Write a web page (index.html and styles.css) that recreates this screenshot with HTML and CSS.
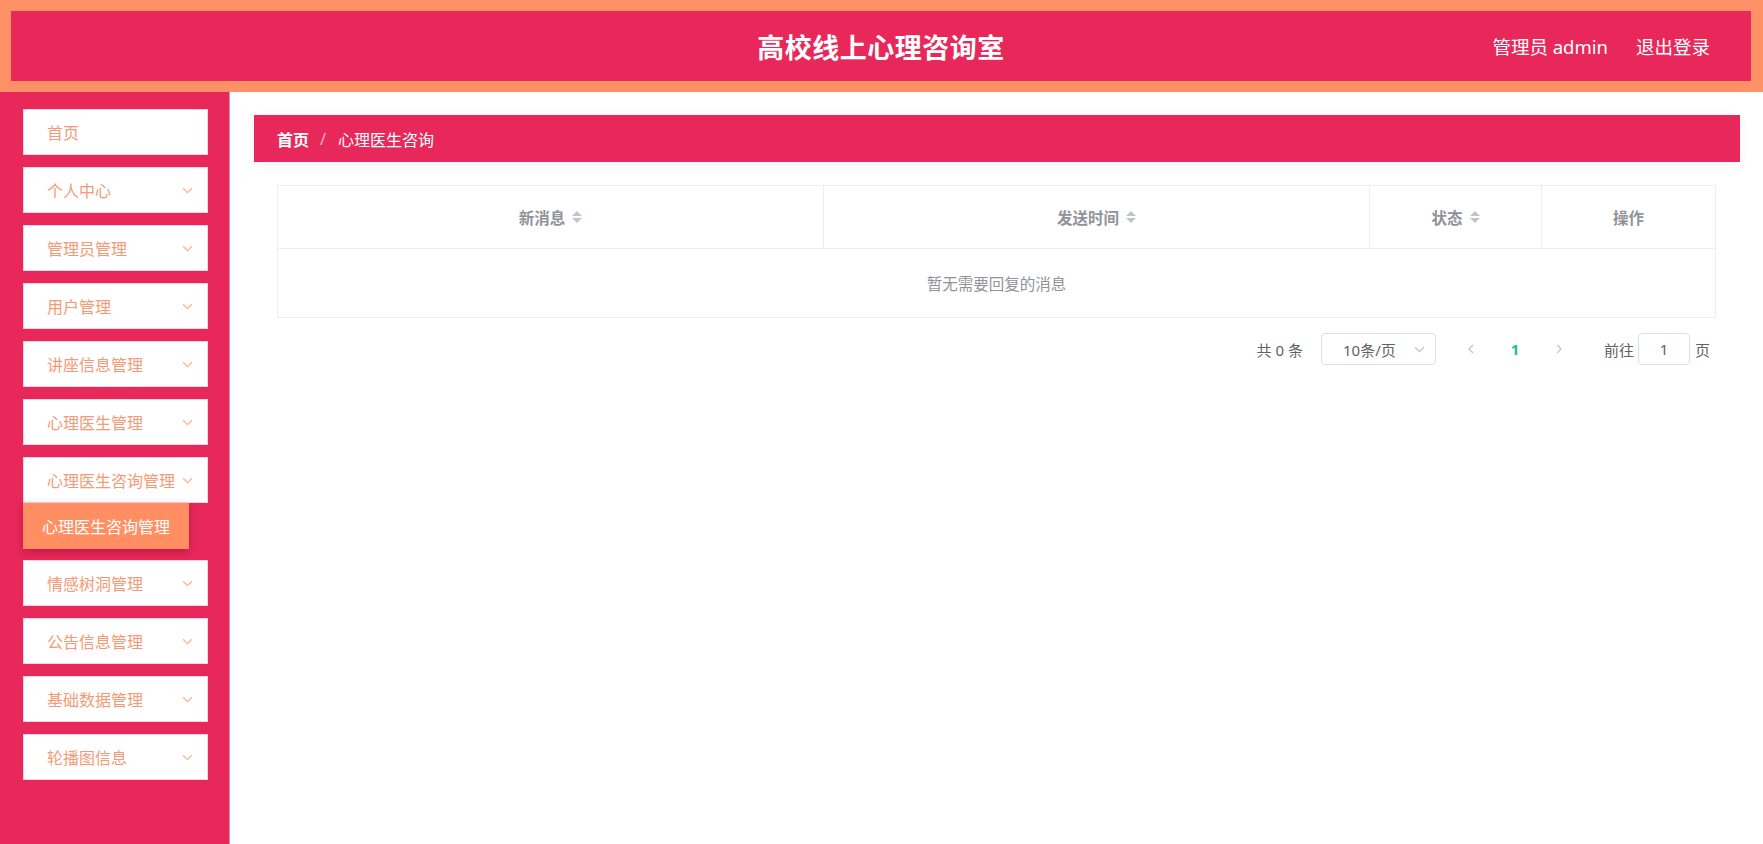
FILE: index.html
```html
<!DOCTYPE html>
<html lang="zh-CN">
<head>
    <meta charset="UTF-8">
    <title>高校线上心理咨询室</title>
    <link rel="stylesheet" href="styles.css">
</head>
<body>
    <div class="header">
        <div class="header-inner">
            <div></div>
            <div class="site-title">高校线上心理咨询室</div>
            <div class="user-bar">
                <span>管理员 admin</span>
                <a href="#">退出登录</a>
            </div>
        </div>
    </div>

    <div class="layout">
        <div class="sidebar">
            <div class="menu-item">首页</div>
            <div class="menu-item">个人中心 <svg class="chev" viewBox="0 0 10 6"><polyline points="1,1 5,5 9,1"/></svg></div>
            <div class="menu-item">管理员管理 <svg class="chev" viewBox="0 0 10 6"><polyline points="1,1 5,5 9,1"/></svg></div>
            <div class="menu-item">用户管理 <svg class="chev" viewBox="0 0 10 6"><polyline points="1,1 5,5 9,1"/></svg></div>
            <div class="menu-item">讲座信息管理 <svg class="chev" viewBox="0 0 10 6"><polyline points="1,1 5,5 9,1"/></svg></div>
            <div class="menu-item">心理医生管理 <svg class="chev" viewBox="0 0 10 6"><polyline points="1,1 5,5 9,1"/></svg></div>
            <div class="menu-item open">心理医生咨询管理 <svg class="chev" viewBox="0 0 10 6"><polyline points="1,1 5,5 9,1"/></svg></div>
            <div class="submenu">心理医生咨询管理</div>
            <div class="menu-item">情感树洞管理 <svg class="chev" viewBox="0 0 10 6"><polyline points="1,1 5,5 9,1"/></svg></div>
            <div class="menu-item">公告信息管理 <svg class="chev" viewBox="0 0 10 6"><polyline points="1,1 5,5 9,1"/></svg></div>
            <div class="menu-item">基础数据管理 <svg class="chev" viewBox="0 0 10 6"><polyline points="1,1 5,5 9,1"/></svg></div>
            <div class="menu-item">轮播图信息 <svg class="chev" viewBox="0 0 10 6"><polyline points="1,1 5,5 9,1"/></svg></div>
        </div>

        <div class="main">
            <div class="breadcrumb">
                <b>首页</b>
                <span class="sep">/</span>
                <span>心理医生咨询</span>
            </div>

            <div class="table-box">
                <table class="data-table">
                    <colgroup>
                        <col style="width: 546px">
                        <col style="width: 546px">
                        <col style="width: 172px">
                        <col>
                    </colgroup>
                    <thead>
                        <tr>
                            <th>新消息<span class="sort"><i class="up"></i><i class="down"></i></span></th>
                            <th>发送时间<span class="sort"><i class="up"></i><i class="down"></i></span></th>
                            <th>状态<span class="sort"><i class="up"></i><i class="down"></i></span></th>
                            <th>操作</th>
                        </tr>
                    </thead>
                    <tbody>
                        <tr>
                            <td colspan="4" class="empty">暂无需要回复的消息</td>
                        </tr>
                    </tbody>
                </table>
            </div>

            <div class="pager">
                <span class="total">共 0 条</span>
                <div class="size-select">
                    <span>10条/页</span>
                    <svg class="chev grey" viewBox="0 0 10 6"><polyline points="1,1 5,5 9,1"/></svg>
                </div>
                <button class="pg-btn"><svg viewBox="0 0 6 10"><polyline points="5,1 1,5 5,9"/></svg></button>
                <button class="pg-btn active">1</button>
                <button class="pg-btn"><svg viewBox="0 0 6 10"><polyline points="1,1 5,5 1,9"/></svg></button>
                <span class="jump">前往</span>
                <input class="jump-input" type="text" value="1">
                <span>页</span>
            </div>
        </div>
    </div>
</body>
</html>
```

FILE: styles.css
```css
/* base */
body {
    margin: 0;
    font-family: "Noto Sans", "Noto Sans CJK SC", sans-serif;
    background: #fff;
}

.header {
    background: #ff9166;
    padding: 11px 12px 11px 11px;
}

.header-inner {
    background: #e8285a;
    height: 70px;
    display: grid;
    grid-template-columns: 1fr auto 1fr;
    align-items: center;
}

.site-title {
    color: #fff;
    font-size: 27px;
    font-weight: bold;
    letter-spacing: 0.5px;
}

.user-bar {
    justify-self: end;
    padding-right: 41px;
    color: #fff;
    font-size: 18.5px;
    display: flex;
    gap: 28px;
}

.user-bar a {
    color: #fff;
    text-decoration: none;
}

.layout {
    display: flex;
    min-height: 752px;
}

.sidebar {
    width: 230px;
    box-sizing: border-box;
    background: #e8285a;
    border-right: 1px solid #f08aa3;
    padding: 17px 0 0 23px;
}

.menu-item {
    width: 185px;
    height: 46px;
    box-sizing: border-box;
    background: #fff;
    border: 1px solid #fbd3dc;
    margin-bottom: 12px;
    padding: 0 14px 0 23px;
    display: flex;
    align-items: center;
    justify-content: space-between;
    color: #f59a76;
    font-size: 16px;
}

.menu-item.open {
    margin-bottom: 0;
}

.chev {
    width: 11px;
    height: 7px;
    fill: none;
    stroke: #f7b396;
    stroke-width: 1.1;
}

.chev.grey {
    stroke: #c0c4cc;
}

.submenu {
    width: 166px;
    height: 46px;
    box-sizing: border-box;
    background: #ff8f63;
    color: #fff;
    font-size: 16px;
    padding-left: 19px;
    display: flex;
    align-items: center;
    box-shadow: 0 3px 8px rgba(120, 0, 30, 0.35);
    margin-bottom: 11px;
}

.main {
    flex: 1;
    padding: 23px 23px 0 24px;
}

.breadcrumb {
    height: 47px;
    background: #e8285a;
    display: flex;
    align-items: center;
    padding-left: 23px;
    color: #fff;
    font-size: 16px;
    box-shadow: 0 2px 10px rgba(0, 0, 0, 0.06);
}

.breadcrumb .sep {
    margin: 0 12px 0 11px;
    color: #f7b4c4;
}

.table-box {
    margin: 23px 24px 0 23px;
}

.data-table {
    width: 100%;
    border-collapse: collapse;
    table-layout: fixed;
    border: 1px solid #ebeef5;
}

.data-table th {
    height: 62px;
    color: #909399;
    font-size: 15.5px;
    font-weight: bold;
    border-right: 1px solid #ebeef5;
    border-bottom: 1px solid #ebeef5;
    padding: 0;
}

.data-table th:last-child {
    border-right: none;
}

.sort {
    display: inline-flex;
    flex-direction: column;
    gap: 2px;
    margin-left: 7px;
    vertical-align: middle;
    position: relative;
    top: -2px;
}

.sort i {
    width: 0;
    height: 0;
    border-left: 5px solid transparent;
    border-right: 5px solid transparent;
}

.sort .up {
    border-bottom: 5px solid #c0c4cc;
}

.sort .down {
    border-top: 5px solid #c0c4cc;
}

.empty {
    height: 66px;
    text-align: center;
    color: #909399;
    font-size: 15.5px;
    border-bottom: 1px solid #ebeef5;
}

.pager {
    display: flex;
    justify-content: flex-end;
    align-items: center;
    margin: 15px 30px 0 0;
    color: #606266;
    font-size: 15px;
}

.total {
    margin-right: 18px;
}

.size-select {
    width: 115px;
    height: 32px;
    box-sizing: border-box;
    border: 1px solid #dcdfe6;
    border-radius: 4px;
    display: flex;
    align-items: center;
    justify-content: space-between;
    padding: 0 10px 0 21px;
    margin-right: 13px;
}

.pg-btn {
    width: 44px;
    height: 32px;
    border: none;
    background: none;
    font-family: inherit;
    color: #c0c4cc;
    padding: 0;
    display: flex;
    align-items: center;
    justify-content: center;
}

.pg-btn svg {
    width: 6px;
    height: 10px;
    fill: none;
    stroke: #c0c4cc;
    stroke-width: 1.2;
}

.pg-btn.active {
    color: #19be8a;
    font-size: 15px;
    font-weight: bold;
}

.jump {
    margin-left: 23px;
    margin-right: 4px;
}

.jump-input {
    width: 52px;
    height: 32px;
    box-sizing: border-box;
    border: 1px solid #dcdfe6;
    border-radius: 4px;
    text-align: center;
    font-family: inherit;
    font-size: 15px;
    color: #606266;
    margin-right: 5px;
}
```
